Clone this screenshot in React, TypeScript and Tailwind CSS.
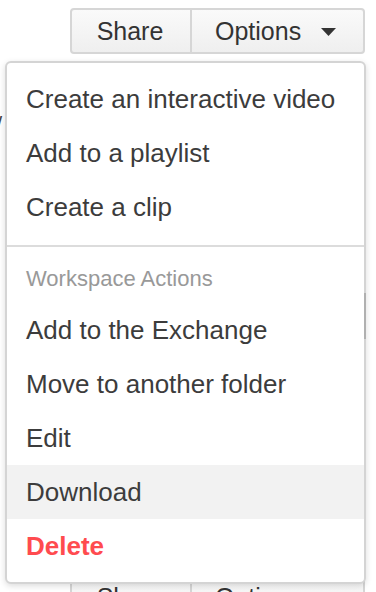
import React from "react";

function ButtonGroup({ className = "" }: { className?: string }) {
  return (
    <div className={`flex h-[46px] w-[295px] rounded-[4px] border-2 border-[#d6d6d6] bg-gradient-to-b from-[#fafafa] to-[#efefef] text-[25px] leading-none text-[#333] ${className}`}>
      <div className="flex w-[118px] items-center justify-center pr-[2px]">Share</div>
      <div className="w-[2px] bg-[#d6d6d6]" />
      <div className="flex flex-1 items-center pl-[23px]">
        <span>Options</span>
        <svg width="15" height="8" viewBox="0 0 15 8" className="ml-[20px] mt-[2px]">
          <path d="M0 0 L15 0 L7.5 8 Z" fill="#333" />
        </svg>
      </div>
    </div>
  );
}

function Item({ children, className = "" }: { children: React.ReactNode; className?: string }) {
  return (
    <div className={`flex h-[54px] items-center pl-[19px] text-[26px] text-[#3c3c3c] ${className}`}>
      {children}
    </div>
  );
}

export default function App() {
  return (
    <div
      className="relative h-[592px] w-[376px] overflow-hidden bg-white"
      style={{ fontFamily: '"Liberation Sans", Arial, Helvetica, sans-serif' }}
    >
      <div className="flex flex-col pl-[70px] pt-[8px]">
        <ButtonGroup />
        <ButtonGroup className="mt-[520px]" />
      </div>

      <span className="absolute left-[-4px] top-[114px] text-[22px] leading-none text-[#444]">/</span>

      <div className="absolute left-[5px] top-[61px] w-[361px] rounded-[6px] border-2 border-[#d4d4d4] bg-white py-[9px] shadow-[0_2px_6px_rgba(0,0,0,0.14)]">
        <Item>Create an interactive video</Item>
        <Item>Add to a playlist</Item>
        <Item>Create a clip</Item>
        <div className="mt-[11px] h-[2px] bg-[#dcdcdc]" />
        <div className="pb-[12px] pl-[19px] pt-[20px] text-[22px] leading-[24px] text-[#999]">Workspace Actions</div>
        <Item>Add to the Exchange</Item>
        <Item>Move to another folder</Item>
        <Item>Edit</Item>
        <Item className="bg-[#f2f2f2]">Download</Item>
        <Item className="font-bold text-[#ff4b4f]">Delete</Item>
        <div className="absolute right-[-2px] top-[230px] h-[46px] w-[2px] bg-[#b0b0b0]" />
      </div>
    </div>
  );
}
